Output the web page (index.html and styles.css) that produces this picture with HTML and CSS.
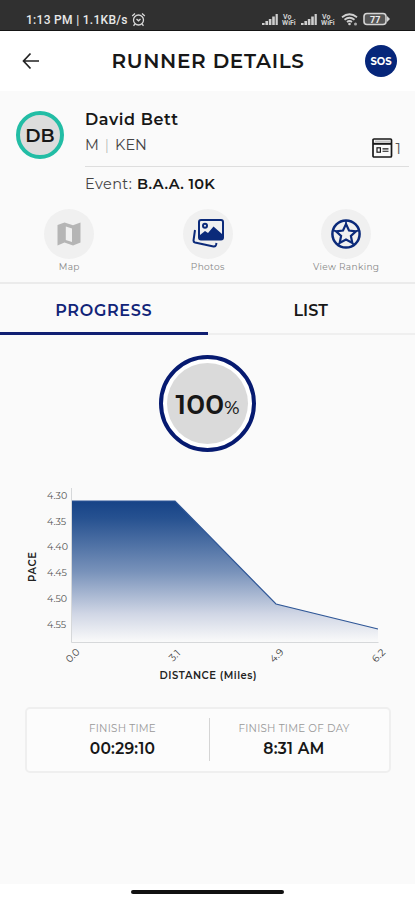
FILE: index.html
```html
<!DOCTYPE html>
<html lang="en">
<head>
<meta charset="utf-8">
<title>Runner Details</title>
<link rel="stylesheet" href="styles.css">
</head>
<body>
<div class="status">
  <div class="status-left"><span class="clock">1:13 PM | 1.1KB/s</span>
    <svg width="15" height="15" viewBox="0 0 15 15" fill="none" stroke="#d8d8d8" stroke-width="1.3"><circle cx="7.5" cy="8" r="5"/><path d="M5.500 7L7.500 8.800L9.500 7M1.2 4L4 1.5M11 1.5L13.8 4M4 12L2.5 13.7M11 12L12.5 13.7"/></svg>
  </div>
  <svg class="status-right" width="130" height="16" viewBox="0 0 130 16">
    <g fill="#cfcfcf">
      <path d="M1 12h2.6v2H1zM4.4 10H7v4H4.4zM7.8 8h2.6v6H7.8zM11.2 5.5h2.6V14h-2.6zM14.6 3h2.2v11h-2.2z"/>
      <path d="M40 12h2.6v2H40zM43.4 10H46v4h-2.6zM46.8 8h2.6v6h-2.6zM50.2 5.5h2.6V14h-2.6zM53.6 3h2.2v11h-2.2z"/>
    </g>
    <g class="vo"><text x="22" y="7.6">Vo</text><text x="21" y="14">WiFi</text><text x="61" y="7.6">Vo</text><text x="60" y="14">WiFi</text></g>
    <g fill="none" stroke="#d0d0d0" stroke-width="1.8"><path d="M81 6.2Q88.500 .2 96 6.200M83.500 8.700Q88.500 4.700 93.500 8.700M86 11Q88.500 9 91 11"/></g>
    <circle cx="88.500" cy="13" r="1.300" fill="#d0d0d0"/><circle cx="94.500" cy="13" r="1.500" fill="#aaa"/>
    <rect x="103" y="2.500" width="22" height="11" rx="3" fill="#555" stroke="#d4d4d4" stroke-width="1.600"/>
    <path d="M126 5l3 3-3 3z" fill="#d4d4d4"/>
    <text class="batt" x="109" y="11.500">77</text>
  </svg>
</div>
<header class="header">
  <svg width="18" height="18" viewBox="0 0 18 18" fill="none" stroke="#222" stroke-width="1.700"><path d="M17 9H1.500M8.500 1.500L1.500 9L8.500 16.500"/></svg>
  <h1 class="title">RUNNER DETAILS</h1>
  <div class="sos">SOS</div>
</header>
<section class="runner">
  <div class="avatar"><span>DB</span></div>
  <div class="info">
    <div class="name"><span>David Bett</span></div>
    <div class="meta">
      <div class="country"><span>M</span><span class="bar">|</span><span>KEN</span></div>
      <div class="bib"><svg width="21" height="20" viewBox="0 0 21 20" fill="none" stroke="#191919" stroke-width="1.700"><rect x="1" y="1" width="18.500" height="18" rx="1"/><path d="M1 5.800H19.500" stroke-width="2"/><path d="M3 3.200H18" stroke="#aaa" stroke-width="1"/><rect x="5" y="9.800" width="3.400" height="4.400" stroke-width="1.200"/><path d="M10.500 10.900H16.500M10.500 13.200H16.500" stroke-width="1.100"/></svg><span>1</span></div>
    </div>
    <div class="event"><span class="event-label">Event:</span><strong>B.A.A. 10K</strong></div>
  </div>
</section>
<nav class="actions">
  <div class="action"><div class="disc"><svg width="26" height="26" viewBox="0 0 26 26"><path d="M1.500 4L8.500 1.500L17 4.300L24.500 1.500V21.500L17 24.500L8.500 21.500L1.500 24.500Z" fill="#b5b5b5"/><path d="M9.800 5.500L16 7.500V21L9.800 19Z" fill="#f0f0f0"/></svg></div><span class="map">Map</span></div>
  <div class="action"><div class="disc"><svg width="34" height="32" viewBox="0 0 34 32" fill="none" stroke="#0b2a7a" stroke-width="2"><rect x="8" y="2" width="24" height="19.500" rx="2"/><circle cx="14" cy="7.800" r="2"/><path d="M9 20V17L14 13L17 15L22.500 8.500L31 16V21H9Z" fill="#0b2a7a" stroke="none"/><path d="M4 12L2.500 22.500Q2.400 24 4 24.500L22.500 28.500Q24.500 28.800 25 27L25.500 25"/></svg></div><span class="photos">Photos</span></div>
  <div class="action"><div class="disc"><svg width="32" height="32" viewBox="0 0 32 32" fill="none" stroke="#0b2a7a"><circle cx="16" cy="16" r="13.600" stroke-width="2.500"/><path d="M16 6L19 12.500L26 13.300L20.900 18L22.300 25L16 21.500L9.700 25L11.100 18L6 13.300L13 12.500Z" stroke-width="2.200"/><path d="M16 2V6M29.300 12L26 13.300M24.400 27.500L22.300 25M7.600 27.500L9.700 25M2.700 12L6 13.300" stroke-width="1.500"/></svg></div><span class="ranking">View Ranking</span></div>
</nav>
<div class="tabs"><div class="tab active"><span>PROGRESS</span></div><div class="tab"><span class="list">LIST</span></div></div>
<main class="content">
  <div class="ring"><div class="ring-in"><span class="num">100</span><span class="pct">%</span></div></div>
  <svg class="chart" width="415" height="210" viewBox="0 480 415 210">
    <defs><linearGradient id="fade" x1="0" y1="501" x2="0" y2="642" gradientUnits="userSpaceOnUse"><stop offset="0" stop-color="#164387"/><stop offset=".12" stop-color="#265190"/><stop offset=".5" stop-color="#7892ba"/><stop offset=".8" stop-color="#d0d6e5"/><stop offset="1" stop-color="#fafafa"/></linearGradient></defs>
    <path d="M72 501H175L276 604L378 629V642H72Z" fill="url(#fade)"/>
    <path d="M72 501H175L276 604L378 629" fill="none" stroke="#2f5797" stroke-width="1.200"/>
    <path d="M71.500 488V642.500H378.500" fill="none" stroke="#d6d8da"/>
    <g class="ylab"><text x="47" y="499">4.30</text><text x="47" y="524.500">4.35</text><text x="47" y="550">4.40</text><text x="47" y="576">4.45</text><text x="47" y="601.500">4.50</text><text x="47" y="627.500">4.55</text></g>
    <g class="xlab"><text transform="translate(72.500 655.500) rotate(-45)" y="3.500">0.0</text><text transform="translate(174.500 655.500) rotate(-45)" y="3.500">3.1</text><text transform="translate(276.500 655.500) rotate(-45)" y="3.500">4.9</text><text transform="translate(378.500 655.500) rotate(-45)" y="3.500">6.2</text></g>
    <text class="axis" x="159.500" y="679" textLength="97">DISTANCE (Miles)</text>
    <text class="axis" transform="translate(35.500 582) rotate(-90)" textLength="30">PACE</text>
  </svg>
  <div class="card">
    <div class="cell"><span class="label l1">FINISH TIME</span><span class="value v1">00:29:10</span></div>
    <div class="cell second"><span class="label l2">FINISH TIME OF DAY</span><span class="value v2">8:31 AM</span></div>
  </div>
</main>
<footer class="homebar"><div class="pill"></div></footer>
</body>
</html>
```
FILE: styles.css
```css
* { box-sizing: border-box; }
body { margin: 0; width: 415px; height: 900px; display: flex; flex-direction: column; overflow: hidden; background: #fafafa; color: #171717; font-family: Montserrat, Inter, sans-serif; white-space: nowrap; }
.status { height: 31px; background: #303030; border-bottom: 1px solid #151515; display: flex; justify-content: space-between; padding: 11px 24px 0 26px; color: #e8e8e8; }
.status-left { display: flex; gap: 3px; height: 17px; align-items: center; }
.clock { font: 500 12px/17px Roboto, sans-serif; letter-spacing: 0.3px; padding-top: 1px; }
.status-right { display: block; }
.vo { font: 700 7px Roboto, sans-serif; fill: #cfcfcf; }
.batt { font: 700 9px Roboto, sans-serif; fill: #eee; }
.header { height: 60px; background: #fff; display: flex; align-items: center; justify-content: space-between; padding: 0 18px 0 22px; }
.title { margin: 0 0 0 11px; font-size: 20px; font-weight: 600; letter-spacing: .7px; }
.sos { width: 32px; height: 32px; border-radius: 50%; background: #06267a; color: #fff; font-size: 10px; font-weight: 700; line-height: 33px; text-align: center; }
.runner { height: 109px; display: flex; padding: 16px 6px 0 16px; gap: 21px; }
.avatar { width: 48px; height: 48px; margin-top: 4px; border-radius: 50%; border: 4px solid #22bda5; background: #dcdcdc; display: flex; align-items: center; justify-content: center; font-size: 18.5px; font-weight: 600; }
.info { flex: 1; }
.name { font-size: 16px; font-weight: 600; line-height: 25px; letter-spacing: .6px; }
.meta { height: 35px; border-bottom: 1px solid #dedede; display: flex; justify-content: space-between; }
.country { display: flex; gap: 6px; font-size: 14.5px; line-height: 27px; color: #444; }
.bar { color: #aaa; font-weight: 300; }
.bib { display: flex; align-items: center; gap: 3px; padding: 0 8px 0 0; height: 32px; font-size: 15px; color: #555; }
.event { display: flex; gap: 5px; font-size: 14.5px; line-height: 34px; }
.event-label { color: #444; letter-spacing: .4px; }
.event strong { font-weight: 600; letter-spacing: .3px; }
.actions { height: 84px; display: grid; grid-template-columns: repeat(3, 138.5px); padding-top: 9px; border-bottom: 2px solid #ebebeb; }
.action { display: flex; flex-direction: column; align-items: center; font-size: 9px; line-height: 14px; color: #888; letter-spacing: .35px; }
.disc { width: 50px; height: 50px; border-radius: 50%; background: #f0f0f0; display: flex; align-items: center; justify-content: center; margin-bottom: 1px; }
.tabs { height: 51px; display: flex; }
.tab { flex: 1; display: flex; align-items: center; justify-content: center; border-bottom: 2px solid #efefef; padding-top: 4px; font-size: 16px; font-weight: 600; letter-spacing: .7px; }
.list { letter-spacing: .1px; margin-right: 1px; }
.active { color: #112478; border-bottom: 3px solid #101f72; }
.content { flex: 1; display: flex; flex-direction: column; align-items: center; }
.ring { margin-top: 20px; width: 97px; height: 97px; border-radius: 50%; border: 4px solid #061a70; background: #fff; padding: 4px; }
.ring-in { height: 100%; border-radius: 50%; background: #dadada; display: flex; align-items: baseline; justify-content: center; line-height: 83px; }
.num { font-size: 28px; font-weight: 600; letter-spacing: .1px; }
.pct { font-size: 18px; font-weight: 500; }
.chart { margin-top: 28px; display: block; flex: none; }
.ylab { font-size: 9.5px; fill: #555; }
.xlab { font-size: 10px; fill: #444; text-anchor: middle; }
.axis { font-size: 10px; font-weight: 600; fill: #222; }
.card { margin-top: 17px; width: 366px; height: 66px; border: 2px solid #efefef; border-radius: 5px; background: #fcfcfc; display: flex; align-items: center; padding-bottom: 1px; }
.cell { width: 182px; height: 43px; padding: 4px 0 0 10px; display: flex; flex-direction: column; align-items: center; }
.second { width: 180px; padding-left: 0; padding-right: 10px; border-left: 1px solid #d5d5d5; }
.label { font-size: 10.3px; line-height: 14px; color: #999; letter-spacing: .25px; }
.value { font-size: 15.5px; font-weight: 600; line-height: 24px; margin-top: 1px; letter-spacing: .25px; }
.homebar { height: 16px; background: #fff; display: flex; justify-content: center; padding-top: 6px; }
.pill { width: 153px; height: 4px; border-radius: 2px; background: #111; }
```
